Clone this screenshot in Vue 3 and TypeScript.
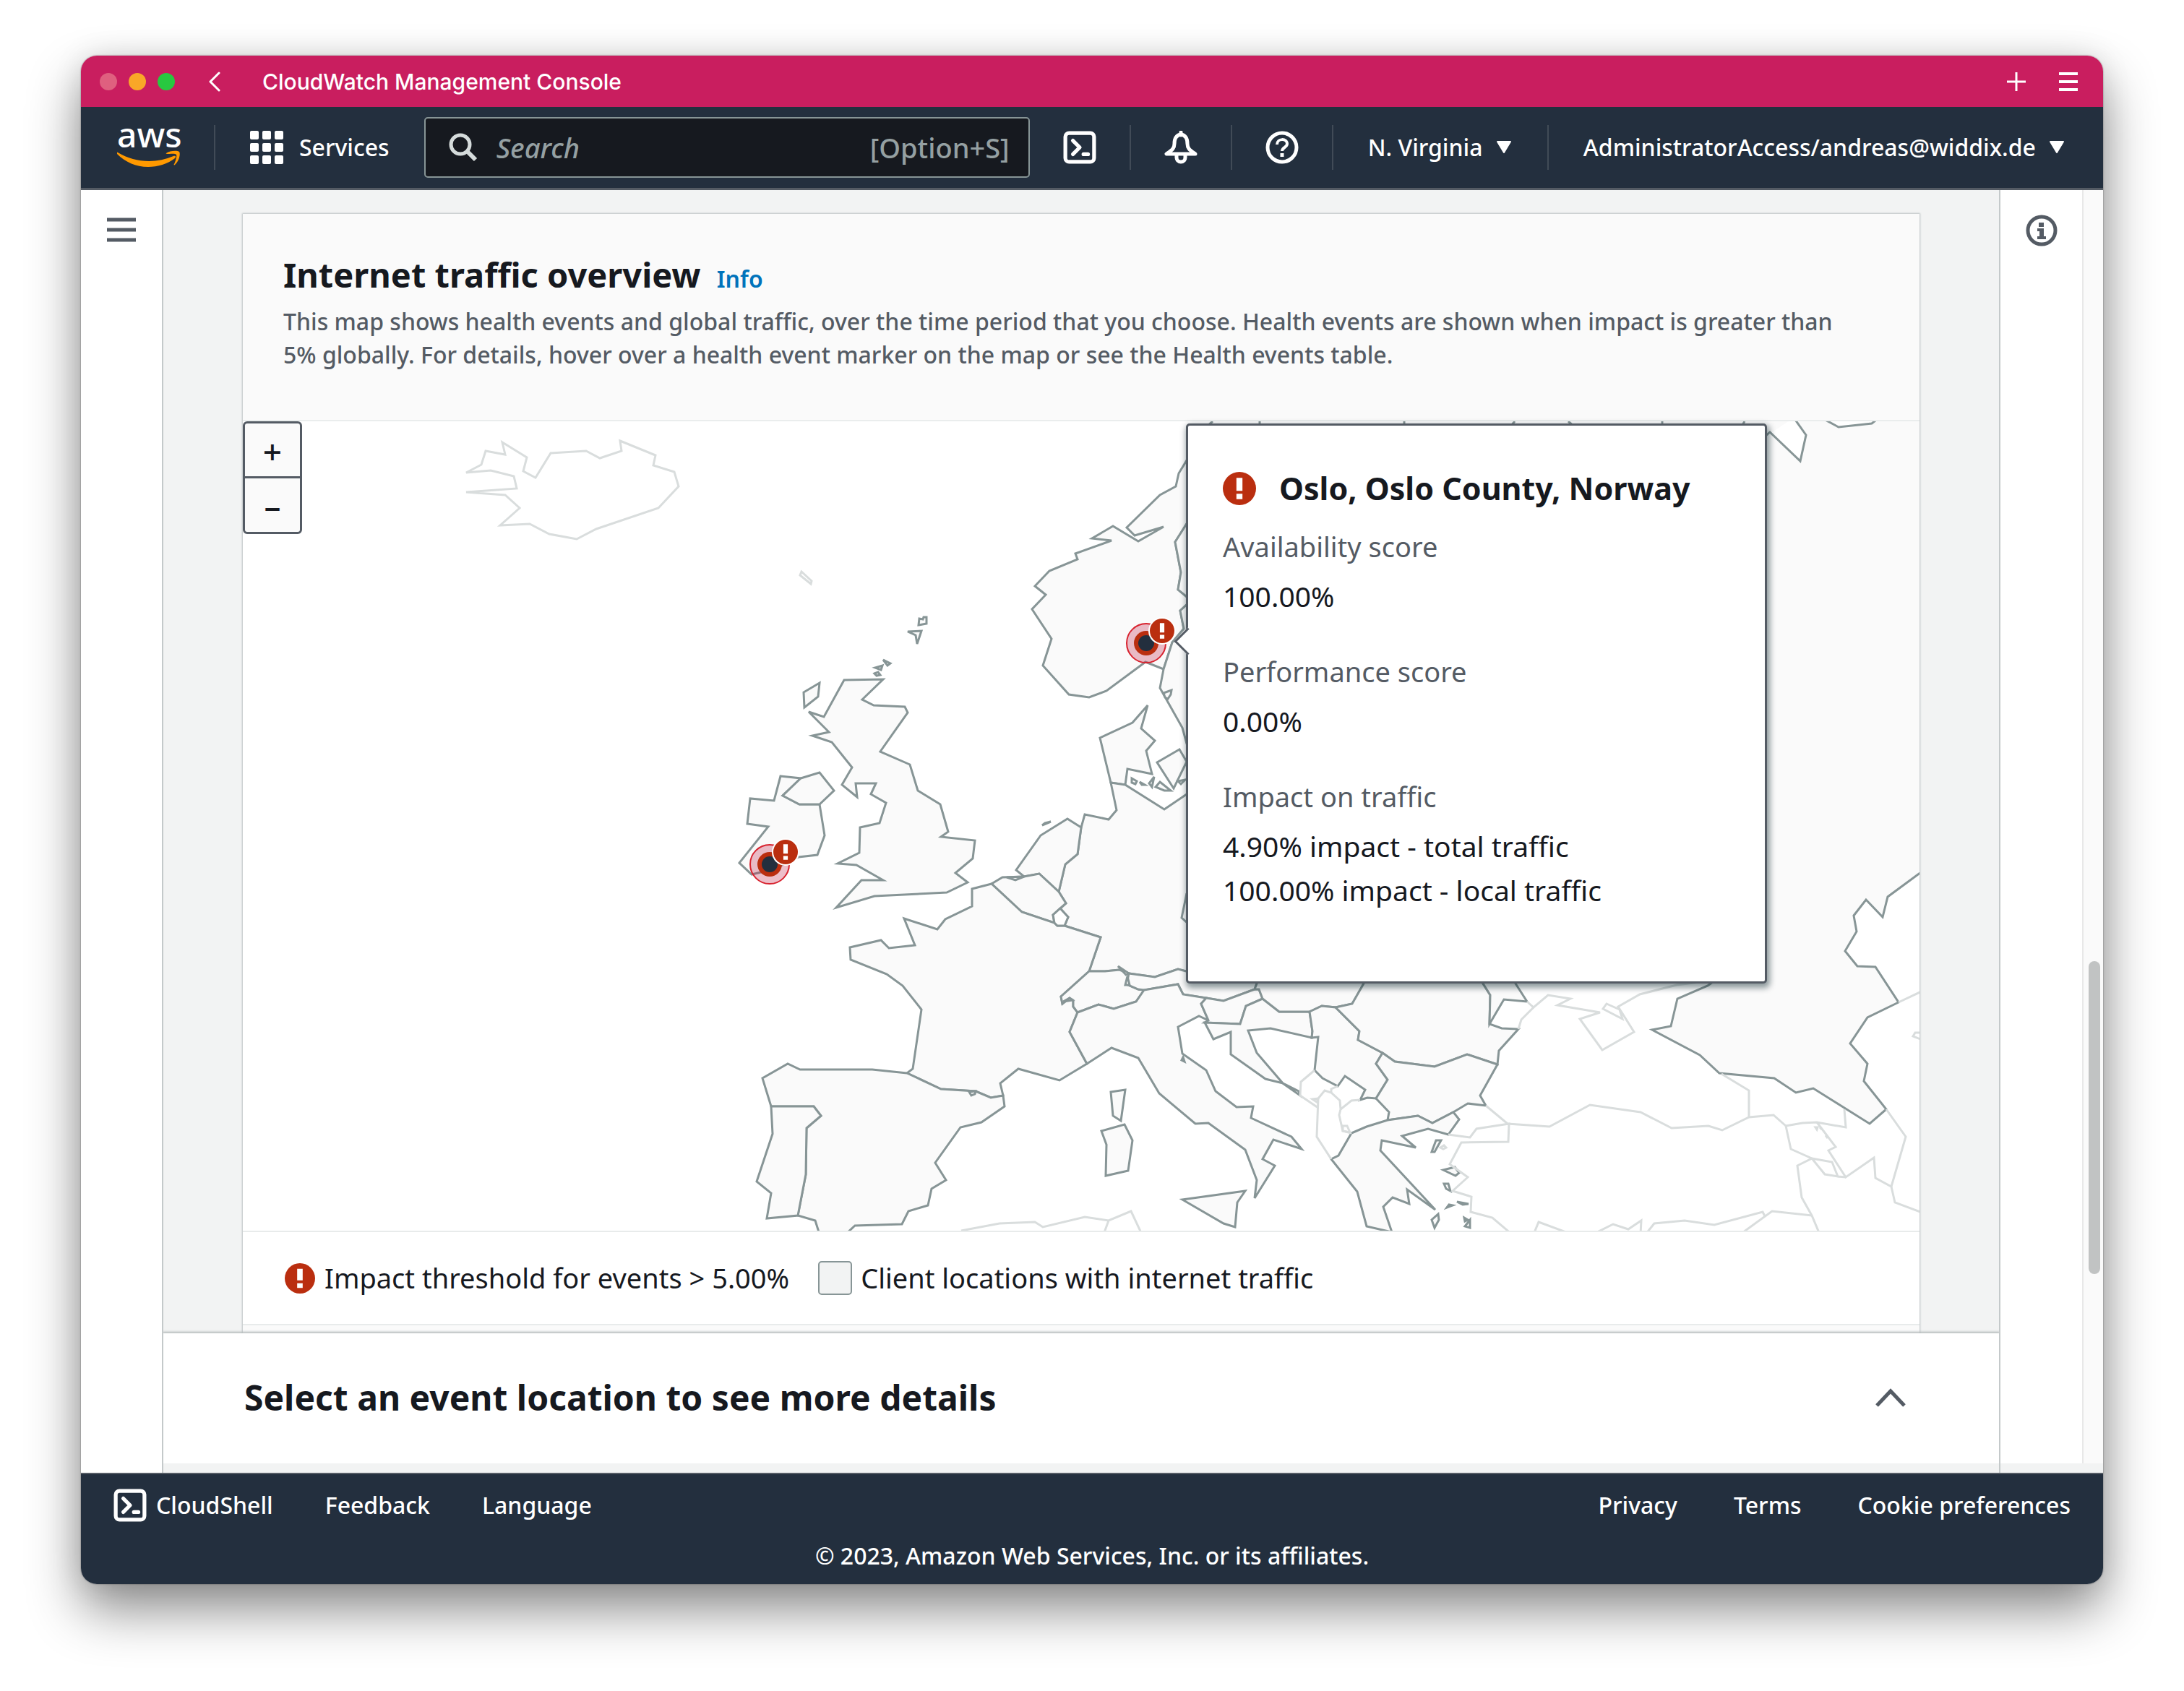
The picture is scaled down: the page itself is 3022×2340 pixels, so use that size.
<script setup lang="ts">
import { ref } from 'vue'

interface Pin {
  name: string
  x: number
  y: number
}

const query = ref('')

const helpLinks = ['Feedback', 'Language']
const legalLinks = ['Privacy', 'Terms', 'Cookie preferences']

const pins: Pin[] = [
  { name: 'Oslo', x: 1586, y: 890 },
  { name: 'Ireland', x: 1065, y: 1196 },
]

const metrics = [
  { label: 'Availability score', values: ['100.00%'] },
  { label: 'Performance score', values: ['0.00%'] },
  { label: 'Impact on traffic', values: ['4.90% impact - total traffic', '100.00% impact - local traffic'] },
]

// Countries that have client traffic
const activeLand: string[] = [
  // Scandinavia
  'M1650 620 1642 637 1631 655 1627 673 1605 685 1559 730 1570 741 1610 729 1575 749 1540 728 1511 745 1538 748 1488 766 1491 774 1452 790 1432 811 1447 823 1428 843 1455 884 1443 921 1479 961 1507 965 1531 956 1585 916 1610 926 1622 889 1638 870 1633 845 1646 833 1646 829 1630 816 1634 792 1626 750 1650 712Z',
  'M1650 712 1626 750 1634 792 1630 816 1646 829 1646 833 1633 845 1638 870 1622 889 1610 926 1605 952 1636 1007 1642 1029 1650 1050Z',
  'M1610 959 1621 955 1620 961 1616 967 1612 965Z',
  // Denmark
  'M1588 976 1579 1008 1598 1025 1586 1039 1594 1071 1560 1064 1557 1086 1537 1083 1522 1021 1567 1000Z',
  'M1632 1037 1642 1054 1624 1091 1601 1055Z',
  'M1605 1082 1620 1094 1611 1094 1599 1089Z',
  'M1597 1075 1594 1089 1590 1084Z',
  'M1577 1082 1584 1086 1580 1086Z',
  'M1566 1077 1573 1081 1571 1085 1566 1083Z',
  'M1630 1081 1640 1079 1634 1085Z',
  // Great Britain and its islands
  'M1168 941 1222 940 1193 968 1209 976 1252 978 1256 986 1218 1040 1259 1058 1270 1094 1301 1113 1312 1151 1302 1158 1349 1163 1346 1188 1322 1208 1339 1221 1310 1235 1210 1240 1157 1256 1192 1218 1222 1218 1185 1197 1159 1195 1189 1180 1190 1145 1217 1139 1226 1111 1205 1099 1212 1084 1184 1084 1186 1103 1165 1086 1179 1062 1151 1027 1124 1018 1147 1013 1119 985 1140 992Z',
  'M1134 945 1132 964 1113 979 1112 958Z',
  'M1271 865 1272 856 1277 857 1278 854 1282 854 1282 863Z',
  'M1256 874 1275 873 1269 891 1267 879Z',
  'M1222 913 1232 918 1228 921Z',
  'M1211 924 1221 921 1219 927Z',
  'M1210 932 1215 930 1218 934 1213 935Z',
  // Ireland
  'M1080 1074 1108 1077 1083 1101 1106 1113 1134 1113 1141 1156 1131 1183 1105 1186 1070 1203 1040 1210 1023 1194 1063 1144 1034 1140 1038 1105 1071 1108Z',
  'M1108 1077 1134 1069 1154 1094 1134 1113 1106 1113 1083 1101Z',
  // Germany
  'M1660 1086 1642 1099 1611 1120 1557 1086 1537 1083 1545 1121 1534 1134 1501 1127 1496 1145 1491 1182 1474 1196 1465 1234 1475 1250 1467 1257 1478 1269 1473 1281 1523 1297 1507 1344 1529 1344 1549 1342 1562 1347 1598 1352 1630 1341 1660 1349Z',
  'M1642 1236 1640 1246 1635 1270 1646 1280',
  // Netherlands, Belgium
  'M1496 1145 1477 1133 1440 1156 1406 1204 1417 1213 1438 1209 1465 1234 1474 1196 1491 1182Z',
  'M1442 1142 1446 1139 1454 1137Z',
  'M1417 1213 1438 1209 1465 1234 1475 1250 1467 1257 1457 1266 1459 1277 1414 1262 1372 1223 1387 1214Z',
  'M1393 1214 1405 1218 1417 1213Z',
  // France
  'M1372 1223 1345 1230 1345 1254 1308 1272 1297 1286 1251 1271 1266 1308 1230 1312 1219 1301 1176 1311 1177 1328 1227 1348 1249 1364 1275 1397 1263 1479 1255 1485 1302 1507 1350 1510 1371 1519 1388 1516 1384 1499 1409 1479 1466 1495 1504 1472 1480 1428 1491 1401 1485 1393 1485 1384 1480 1381 1470 1389 1468 1379 1507 1344 1523 1297 1473 1281 1463 1281 1459 1277 1414 1262Z',
  'M1537 1511 1557 1508 1551 1551 1540 1544Z',
  // Spain, Portugal, Andorra
  'M1255 1485 1207 1480 1107 1480 1090 1472 1055 1492 1067 1531 1126 1531 1136 1544 1116 1561 1115 1625 1104 1682 1128 1689 1134 1708 1170 1708 1183 1696 1248 1694 1257 1676 1284 1668 1289 1645 1309 1633 1294 1609 1329 1560 1358 1553 1390 1531 1388 1516 1371 1519 1350 1510 1302 1507Z',
  'M1067 1531 1069 1569 1047 1635 1067 1651 1061 1686 1104 1682 1115 1625 1116 1561 1136 1544 1126 1531Z',
  'M1341 1511 1350 1510 1349 1514 1344 1516Z',
  // Switzerland, Austria
  'M1507 1344 1529 1344 1549 1342 1562 1347 1559 1362 1575 1369 1583 1370 1572 1386 1541 1396 1520 1390 1491 1401 1485 1393 1485 1384 1480 1381 1470 1389 1468 1379Z',
  'M1547 1337 1562 1347 1558 1349Z',
  'M1471 1386 1480 1381 1484 1384Z',
  'M1562 1347 1598 1352 1630 1341 1660 1349 1745 1345 1739 1361 1736 1369 1693 1385 1669 1381 1637 1376 1630 1362 1583 1370 1575 1369 1559 1362Z',
  'M1560 1351 1563 1363 1557 1363Z',
  // Italy
  'M1504 1472 1538 1450 1575 1464 1604 1513 1654 1555 1672 1554 1723 1591 1739 1633 1736 1658 1764 1613 1747 1604 1762 1577 1801 1590 1787 1573 1731 1547 1734 1531 1711 1532 1682 1510 1669 1481 1636 1458 1630 1421 1659 1406 1672 1412 1662 1389 1669 1381 1637 1376 1630 1362 1583 1370 1572 1386 1541 1396 1520 1390 1491 1401 1480 1428Z',
  'M1524 1565 1556 1556 1567 1578 1561 1620 1530 1627 1531 1584Z',
  'M1636 1660 1723 1648 1712 1664 1709 1698 1693 1693Z',
  'M1637 1463 1639 1469 1635 1467Z',
  // Slovenia, Croatia
  'M1669 1381 1693 1385 1736 1369 1742 1369 1747 1382 1724 1392 1716 1417 1667 1415 1672 1412 1662 1389Z',
  'M1667 1415 1679 1438 1703 1428 1703 1459 1751 1493 1775 1499 1739 1457 1727 1426 1758 1423 1815 1436 1816 1427 1812 1400 1770 1400 1747 1382 1724 1392 1716 1417Z',
  'M1775 1499 1799 1516 1797 1510Z',
  // Hungary, Serbia, Romania, Bulgaria
  'M1739 1361 1736 1369 1742 1369 1747 1382 1770 1400 1812 1400 1829 1392 1848 1394 1871 1389 1887 1361 1890 1350 1745 1350Z',
  'M1812 1400 1829 1392 1848 1394 1881 1427 1879 1439 1913 1457 1904 1472 1920 1494 1904 1520 1892 1519 1882 1522 1889 1508 1861 1489 1851 1503 1830 1492 1819 1481 1824 1435 1815 1436 1816 1427Z',
  'M1848 1394 1871 1389 1887 1361 1890 1350 2046 1350 2052 1361 2062 1377 2061 1417 2078 1423 2101 1424 2074 1454 2072 1473 2030 1459 1985 1476 1930 1469 1913 1457 1879 1439 1881 1427Z',
  'M2046 1350 2052 1361 2062 1377 2061 1417 2081 1383 2113 1386 2097 1361 2090 1350Z',
  'M1913 1457 1930 1469 1985 1476 2030 1459 2072 1473 2048 1516 2056 1530 2031 1527 2011 1539 1982 1554 1962 1544 1920 1550 1922 1539 1904 1520 1920 1494 1904 1472Z',
  // Greece
  'M1920 1550 1891 1559 1870 1568 1852 1599 1842 1604 1878 1649 1891 1697 1926 1705 1914 1670 1927 1657 1950 1666 1947 1646 1986 1674 1910 1592 1912 1578 1959 1588 1940 1572 1976 1562 2004 1570 2019 1549 2011 1539 1982 1554 1962 1544Z',
  'M1987 1578 1994 1578 1985 1594 1981 1594Z',
  'M1997 1619 2013 1615 2019 1623 2014 1627Z',
  'M1998 1638 2004 1638 2007 1648 2001 1645Z',
  'M2016 1663 2032 1666 2024 1667Z',
  'M2002 1671 2005 1667 2010 1668Z',
  'M1990 1680 1991 1688 1985 1699 1981 1688Z',
  'M2034 1688 2034 1699 2027 1697Z',
  'M2026 1685 2031 1688 2027 1690Z',
  // Russia
  'M2390 1345 2363 1364 2321 1382 2312 1420 2286 1425 2352 1460 2379 1485 2455 1492 2485 1512 2509 1506 2587 1555 2610 1535 2579 1496 2584 1472 2560 1444 2584 1408 2627 1387 2595 1338 2570 1337 2553 1316 2569 1289 2565 1267 2582 1245 2605 1269 2612 1241 2654 1210 2700 1176 2700 570 2300 570 2300 1345Z',
]

// Bays and short coast pieces cut into the land above
const inlets: string[] = [
  'M2440 606 2449 598 2491 638 2499 602 2482 578',
  'M2520 578 2544 591 2590 586 2600 578',
  'M1467 1257 1478 1269 1473 1281 1463 1281 1459 1277 1457 1266Z',
]

const northCoast = 'M1670 590 1678 583M1743 583V590M1943 583V590M2090 590 2096 583M2170 583 2178 590M2410 590 2414 583'

// Countries without traffic: outlines only
const quietLand: string[] = [
  'M695 612 729 633 724 652 741 661 762 627 811 624 830 634 860 624 858 610 907 630 904 644 933 653 939 673 911 703 825 732 798 746 760 739 733 725 692 727 719 703 699 685 645 681 715 676 711 659 679 651 645 654 666 643 672 624 699 629Z',
  'M1109 791 1123 804 1122 808 1107 796Z',
  'M1330 1703 1383 1693 1432 1691 1443 1698 1501 1684 1534 1689 1565 1676 1580 1708M1534 1689 1527 1708',
  'M1819 1481 1800 1497 1799 1516 1824 1533',
  'M1842 1604 1822 1573 1824 1520 1833 1509 1842 1512 1854 1523 1855 1535 1853 1543 1858 1565 1870 1568',
  'M1816 1521 1824 1520 1822 1525Z',
  'M1858 1558 1864 1558 1868 1567 1858 1565Z',
  'M1842 1512 1842 1507 1851 1503',
  'M1855 1535 1870 1523 1882 1522',
  'M2113 1386 2122 1394 2142 1377 2173 1382 2155 1391 2214 1401 2186 1410 2217 1453 2261 1428 2239 1393 2269 1376 2320 1363 2360 1358',
  'M2101 1424 2105 1411 2122 1394',
  'M2223 1389 2241 1397 2245 1410 2218 1396Z',
  'M2056 1530 2086 1555 2144 1559 2200 1529 2270 1539 2313 1561 2364 1558 2383 1564 2420 1546 2454 1543 2471 1558 2478 1590 2507 1603 2487 1613 2493 1657 2507 1682 2518 1708',
  'M2004 1570 2034 1574 2043 1562 2088 1555 2087 1580 2022 1581 2006 1611 2031 1629 2010 1648 2036 1656 2035 1677 2065 1685 2092 1708',
  'M1993 1588 1998 1585 2001 1588 1997 1590Z',
  'M2122 1708 2129 1691 2175 1708',
  'M2204 1708 2232 1694 2253 1701 2271 1689 2270 1708',
  'M2277 1708 2289 1693 2331 1689 2372 1695 2439 1677 2442 1683M2408 1708 2452 1676 2507 1682',
  'M2382 1486 2420 1509 2420 1546',
  'M2471 1558 2494 1554 2514 1553 2554 1560 2552 1535',
  'M2514 1553 2540 1587 2530 1592 2554 1629 2593 1602 2595 1630 2617 1642 2637 1573 2610 1535',
  'M2617 1642 2622 1664 2665 1680',
  'M2507 1603 2535 1608 2543 1628 2525 1625ZM2543 1628 2554 1629',
  'M2512 1560 2515 1560 2514 1563ZM2518 1560 2521 1563ZM2526 1571 2529 1575Z',
  'M2627 1387 2665 1369',
  'M2665 1429 2650 1429 2647 1434 2665 1441',
]
</script>

<template>
  <svg class="sprite" aria-hidden="true">
    <symbol id="alert" viewBox="0 0 44 44">
      <circle cx="22" cy="22" r="22" fill="#ba2e0f" />
      <path d="M18 8h8v17h-8zM18 29h8v7h-8z" fill="#fff" />
    </symbol>
    <symbol id="shell" viewBox="0 0 44 44">
      <rect x="3" y="3" width="38" height="38" rx="5" fill="none" stroke="#fff" stroke-width="5" />
      <path d="M13 13l9 9-9 9" fill="none" stroke="#fff" stroke-width="5" stroke-linecap="round" stroke-linejoin="round" />
      <path d="M27 31h6" stroke="#fff" stroke-width="5" stroke-linecap="round" />
    </symbol>
    <symbol id="caret" viewBox="0 0 22 18">
      <path d="M2 1h18l-9 15z" fill="#fff" stroke="#fff" stroke-width="2" stroke-linejoin="round" />
    </symbol>
  </svg>

  <div class="desktop">
    <div class="window">
      <header class="titlebar">
        <div class="lights"><i class="close" /><i class="minimise" /><i class="zoom" /></div>
        <button class="bare back" type="button" aria-label="Back">
          <svg width="18" height="28" viewBox="0 0 18 28"><path d="M15 2 3 14l12 12" fill="none" stroke="#fff" stroke-width="3" stroke-linecap="round" stroke-linejoin="round" /></svg>
        </button>
        <span class="tab">CloudWatch Management Console</span>
        <button class="bare" type="button" aria-label="New tab">
          <svg width="26" height="26" viewBox="0 0 26 26"><path d="M13 0v26M0 13h26" stroke="#fff" stroke-width="3" /></svg>
        </button>
        <button class="bare tabs" type="button" aria-label="Tab list">
          <svg width="26" height="26" viewBox="0 0 26 26"><path d="M0 2h26M0 13h26M0 24h26" stroke="#fff" stroke-width="4" /></svg>
        </button>
      </header>

      <nav class="nav">
        <a class="logo" href="#" aria-label="AWS home">
          <span>aws</span>
          <svg width="88" height="24" viewBox="0 0 88 24">
            <path d="M1 3C24 17 53 19 78 8c3-1 4 1 2 3-10 8-24 12-37 12C26 23 11 16 0 5c-1-1 0-3 1-2z" fill="#f90" />
            <path d="M68 4c5-4 16-4 18-2s0 13-6 18c-1 1-2 0-1-1 2-4 4-11 3-13s-9-1-13-1c-1 0-2-1-1-1z" fill="#f90" />
          </svg>
        </a>
        <i class="rule" />
        <button class="bare services" type="button">
          <svg width="46" height="46" viewBox="0 0 46 46" fill="#fff">
            <template v-for="row in 3" :key="row">
              <rect v-for="col in 3" :key="col" :x="(col - 1) * 17" :y="(row - 1) * 17" width="12" height="12" rx="2" />
            </template>
          </svg>
          Services
        </button>
        <label class="search">
          <svg width="40" height="40" viewBox="0 0 40 40" fill="none" stroke="#d5dbdb">
            <circle cx="16" cy="16" r="13" stroke-width="5" />
            <path d="M25 25 37 37" stroke-width="6" />
          </svg>
          <input v-model="query" type="search" placeholder="Search" aria-label="Search" />
          <span>[Option+S]</span>
        </label>
        <button class="bare cell" type="button" aria-label="CloudShell">
          <svg width="46" height="46"><use href="#shell" /></svg>
        </button>
        <i class="rule" />
        <button class="bare cell" type="button" aria-label="Notifications">
          <svg width="46" height="46" viewBox="0 0 46 46" fill="none" stroke="#fff" stroke-width="5" stroke-linejoin="round">
            <path d="M23 5c-7 1-9 6-9 13 0 7-4 9-11 14h40c-7-5-11-7-11-14 0-7-2-12-9-13z" />
            <path d="M23 2v4" stroke-linecap="round" />
            <path d="M17 33v4c0 3 2 6 6 6s6-3 6-6v-4" />
          </svg>
        </button>
        <i class="rule" />
        <button class="bare cell" type="button" aria-label="Help">
          <svg width="46" height="46" viewBox="0 0 46 46" fill="none" stroke="#fff" stroke-width="5">
            <circle cx="23" cy="23" r="20" />
            <path d="M16 19c0-9 14-9 14-1 0 5-7 5-7 10" stroke-width="4" />
            <path d="M23 31v5" />
          </svg>
        </button>
        <i class="rule" />
        <button class="bare menu" type="button">N. Virginia<svg width="22" height="18"><use href="#caret" /></svg></button>
        <i class="rule push" />
        <button class="bare menu account" type="button">AdministratorAccess/andreas@widdix.de<svg width="22" height="18"><use href="#caret" /></svg></button>
      </nav>

      <div class="body">
        <aside class="rail left">
          <button class="bare" type="button" aria-label="Open navigation">
            <svg width="40" height="34" viewBox="0 0 40 34"><path d="M0 3h40M0 17h40M0 31h40" stroke="#545b64" stroke-width="5" /></svg>
          </button>
        </aside>

        <div class="centre">
          <main class="content">
            <section class="card">
              <header class="card-head">
                <h2>Internet traffic overview <a href="#">Info</a></h2>
                <p>
                  This map shows health events and global traffic, over the time period that you choose. Health events are
                  shown when impact is greater than 5% globally. For details, hover over a health event marker on the map or
                  see the Health events table.
                </p>
              </header>

              <div class="map">
                <svg class="chart" viewBox="336 583 2320 1120" preserveAspectRatio="xMinYMin slice">
                  <g class="active"><path v-for="(d, i) in activeLand" :key="i" :d="d" /></g>
                  <g class="inlet"><path v-for="(d, i) in inlets" :key="i" :d="d" /><path :d="northCoast" /></g>
                  <g class="quiet"><path v-for="(d, i) in quietLand" :key="i" :d="d" /></g>
                  <g v-for="pin in pins" :key="pin.name">
                    <circle :cx="pin.x" :cy="pin.y" r="27" class="halo" />
                    <circle :cx="pin.x" :cy="pin.y" r="17" fill="#ba2e0f" />
                    <circle :cx="pin.x" :cy="pin.y" r="11" fill="#232f3e" />
                    <circle :cx="pin.x + 22" :cy="pin.y - 17" r="19" fill="#fff" />
                    <use href="#alert" :x="pin.x + 5" :y="pin.y - 34" width="34" height="34" />
                  </g>
                </svg>

                <div class="zoomer">
                  <button type="button" aria-label="Zoom in">+</button>
                  <button type="button" aria-label="Zoom out">–</button>
                </div>

                <div class="popover" role="dialog" aria-label="Oslo, Oslo County, Norway">
                  <h3><svg width="46" height="46"><use href="#alert" /></svg>Oslo, Oslo County, Norway</h3>
                  <dl>
                    <div v-for="m in metrics" :key="m.label">
                      <dt>{{ m.label }}</dt>
                      <dd v-for="v in m.values" :key="v">{{ v }}</dd>
                    </div>
                  </dl>
                </div>
              </div>

              <footer class="legend">
                <svg width="42" height="42"><use href="#alert" /></svg>
                <span>Impact threshold for events &gt; 5.00%</span>
                <i class="swatch" />
                <span>Client locations with internet traffic</span>
              </footer>
              <div class="card-tail" />
            </section>
          </main>

          <section class="split">
            <h2>Select an event location to see more details</h2>
            <button class="bare" type="button" aria-label="Expand panel">
              <svg width="44" height="28" viewBox="0 0 44 28"><path d="M3 25 22 5l19 20" fill="none" stroke="#545b64" stroke-width="5" /></svg>
            </button>
          </section>
          <div class="strip" />
        </div>

        <div class="side">
          <div class="side-row">
            <aside class="rail right">
              <button class="bare" type="button" aria-label="Info">
                <svg width="46" height="46" viewBox="0 0 46 46">
                  <circle cx="23" cy="23" r="19" fill="none" stroke="#545b64" stroke-width="5" />
                  <path d="M19 12h7v6h-7zM17 20h9v11h3v4H17v-4h3v-7h-3z" fill="#545b64" />
                </svg>
              </button>
            </aside>
            <div class="track"><i /></div>
          </div>
          <div class="strip" />
        </div>
      </div>

      <footer class="footer">
        <div class="footer-row">
          <a href="#" class="shell"><svg width="46" height="46"><use href="#shell" /></svg>CloudShell</a>
          <a v-for="l in helpLinks" :key="l" href="#" class="help">{{ l }}</a>
          <div class="legal"><a v-for="l in legalLinks" :key="l" href="#">{{ l }}</a></div>
        </div>
        <p>© 2023, Amazon Web Services, Inc. or its affiliates.</p>
      </footer>
    </div>
  </div>
</template>

<style>
body {
  background: #fff;
}
</style>

<style scoped>
* {
  box-sizing: border-box;
}

h2,
h3,
p,
dl,
dd {
  margin: 0;
}

svg {
  display: block;
  flex: none;
}

.sprite {
  position: absolute;
  width: 0;
  height: 0;
}

.desktop {
  padding: 77px 112px 148px;
  overflow: hidden;
  font-family: 'Noto Sans', 'Open Sans', sans-serif;
  font-size: 38px;
  font-weight: 500;
  line-height: 61px;
  color: #16191f;
}

.window {
  position: relative;
  border-radius: 22px;
  box-shadow: 0 0 2px rgba(0, 0, 0, 0.5), 0 36px 72px rgba(0, 0, 0, 0.45), 0 0 40px rgba(0, 0, 0, 0.1);
}

.bare {
  display: flex;
  align-items: center;
  padding: 0;
  border: 0;
  background: none;
  color: inherit;
  font: inherit;
  white-space: nowrap;
}

.titlebar {
  display: flex;
  align-items: center;
  height: 71px;
  padding: 0 35px 0 26px;
  border-radius: 22px 22px 0 0;
  background: #c91e5f;
  color: #fff;
  font: 500 30px/40px Inter, sans-serif;
}

.lights {
  display: flex;
  gap: 16px;
}

.lights i {
  width: 24px;
  height: 24px;
  border-radius: 50%;
}

.close {
  background: #df607f;
}

.minimise {
  background: #f9a728;
}

.zoom {
  background: #28c840;
}

.back {
  margin: 0 57px 0 46px;
}

.tab {
  flex: 1;
}

.tabs {
  margin-left: 46px;
}

.nav {
  display: flex;
  align-items: center;
  height: 115px;
  padding-right: 53px;
  border-bottom: 3px solid #545b64;
  background: #232f3e;
  color: #fff;
  font-size: 32px;
  line-height: 44px;
}

.logo {
  flex: none;
  width: 88px;
  margin: 0 46px 0 50px;
  padding-bottom: 12px;
  color: #fff;
  font-size: 48px;
  line-height: 44px;
  text-align: center;
  text-decoration: none;
}

.logo span {
  display: block;
}

.rule {
  flex: none;
  width: 2px;
  height: 62px;
  background: #414b57;
}

.services {
  gap: 22px;
  margin: 0 48px;
}

.search {
  display: flex;
  align-items: center;
  gap: 26px;
  flex: 0 1 838px;
  min-width: 0;
  height: 84px;
  padding: 0 26px 0 32px;
  border: 2px solid #879596;
  border-radius: 5px;
  background: #16191f;
  color: #95a0a2;
  font-size: 38px;
}

.search input {
  flex: 1;
  min-width: 0;
  padding: 0;
  border: 0;
  outline: 0;
  background: none;
  color: #fff;
  font: inherit;
}

.search input::placeholder {
  color: #95a0a2;
  font-style: italic;
  opacity: 1;
}

.cell {
  margin: 0 46px;
}

.menu {
  gap: 18px;
  margin: 0 48px;
}

.menu.account {
  margin: 0 0 0 48px;
}

.push {
  margin-left: auto;
}

.body {
  display: flex;
}

.rail {
  display: flex;
  justify-content: center;
  align-items: flex-start;
  background: #fff;
}

.rail.left {
  flex: none;
  width: 112px;
  padding-top: 38px;
}

.side {
  display: flex;
  flex-direction: column;
  flex: none;
  width: 142px;
}

.side-row {
  display: flex;
  flex: 1;
}

.rail.right {
  flex: 1;
  padding-top: 33px;
}

.track {
  width: 29px;
  padding: 1067px 5px 0 7px;
  border-left: 2px solid #e8e8e8;
  background: #fafafa;
}

.track i {
  display: block;
  width: 16px;
  height: 433px;
  border-radius: 8px;
  background: #c1c3c3;
}

.centre {
  flex: 1;
  min-width: 0;
  border: solid #c4c9ca;
  border-width: 0 2px;
}

.content {
  padding: 33px 110px 0;
  background: #f2f3f3;
}

.card {
  background: #fff;
  box-shadow: 0 0 2px 1px #bcc2c3;
}

.card-head {
  padding: 54px 80px 67px 56px;
  border-bottom: 2px solid #eaeded;
  background: #fafafa;
}

h2 {
  font-size: 47px;
  font-weight: 700;
  line-height: 60px;
}

.card-head a {
  margin-left: 10px;
  color: #0073bb;
  font-size: 32px;
  font-weight: 600;
  text-decoration: none;
}

.card-head p {
  margin-top: 6px;
  color: #545b64;
  font-size: 32px;
  line-height: 46px;
}

.map {
  position: relative;
}

.chart {
  width: 100%;
  aspect-ratio: 2320 / 1120;
}

.active {
  fill: #fafafa;
  stroke: #879596;
  stroke-width: 3;
}

.inlet {
  fill: #fff;
  stroke: #879596;
  stroke-width: 3;
}

.quiet {
  fill: none;
  stroke: #d9dddd;
  stroke-width: 3;
}

.halo {
  fill: rgba(190, 20, 60, 0.28);
  stroke: #d8232f;
  stroke-width: 2;
}

.zoomer {
  position: absolute;
  top: 0;
  left: 0;
  width: 82px;
  border: 3px solid #545b64;
  border-radius: 6px;
  background: #fafafa;
}

.zoomer button {
  display: block;
  width: 100%;
  height: 73px;
  padding: 0;
  border: 0;
  background: none;
  color: #16191f;
  font: 500 46px/76px 'Noto Sans', sans-serif;
}

.zoomer button + button {
  height: 77px;
  border-top: 3px solid #545b64;
  line-height: 72px;
}

.popover {
  position: absolute;
  top: 3px;
  left: 1305px;
  width: 804px;
  padding: 57px 50px 96px 48px;
  border: 3px solid #545b64;
  border-radius: 5px;
  background: #fff;
  box-shadow: 2px 4px 8px 2px rgba(0, 28, 36, 0.45);
}

.popover::before {
  content: '';
  position: absolute;
  top: 285px;
  left: -14px;
  width: 24px;
  height: 24px;
  border: solid #545b64;
  border-width: 0 0 3px 3px;
  background: #fff;
  transform: rotate(45deg);
}

.popover h3 {
  display: flex;
  align-items: center;
  gap: 32px;
  font-size: 43px;
  line-height: 60px;
}

.popover dl {
  display: flex;
  flex-direction: column;
  gap: 44px;
  margin-top: 20px;
}

.popover dt {
  margin-bottom: 7px;
  color: #545b64;
  font-weight: 400;
}

.popover dd {
  font-size: 39px;
  font-weight: 400;
}

.legend {
  display: flex;
  align-items: center;
  height: 131px;
  padding-left: 58px;
  border-top: 2px solid #e8ebeb;
  border-bottom: 2px solid #e8ebeb;
  font-weight: 400;
}

.legend svg {
  margin-right: 13px;
}

.swatch {
  width: 47px;
  height: 47px;
  margin: 0 12px 0 40px;
  border: 2px solid #879596;
  border-radius: 5px;
  background: #f2f3f3;
}

.card-tail {
  height: 11px;
  background: #fafafa;
}

.split {
  position: relative;
  display: flex;
  justify-content: space-between;
  align-items: center;
  height: 180px;
  padding: 0 128px 2px 112px;
  background: #fff;
  box-shadow: 0 -1px 3px 1px #b4babb;
  clip-path: inset(-8px 0 0 0);
}

.split h2 {
  font-size: 48px;
}

.strip {
  height: 13px;
  background: #f2f3f3;
}

.footer {
  height: 154px;
  padding: 20px 45px 0;
  border-top: 2px solid #545b64;
  border-radius: 0 0 22px 22px;
  background: #232f3e;
  color: #fff;
  font-size: 32px;
  line-height: 46px;
}

.footer-row {
  display: flex;
  align-items: center;
}

.footer a {
  color: inherit;
  text-decoration: none;
}

.shell {
  display: flex;
  align-items: center;
  gap: 13px;
}

.help {
  margin-left: 72px;
}

.legal {
  display: flex;
  gap: 78px;
  margin-left: auto;
}

.footer p {
  margin-top: 24px;
  text-align: center;
}
</style>
